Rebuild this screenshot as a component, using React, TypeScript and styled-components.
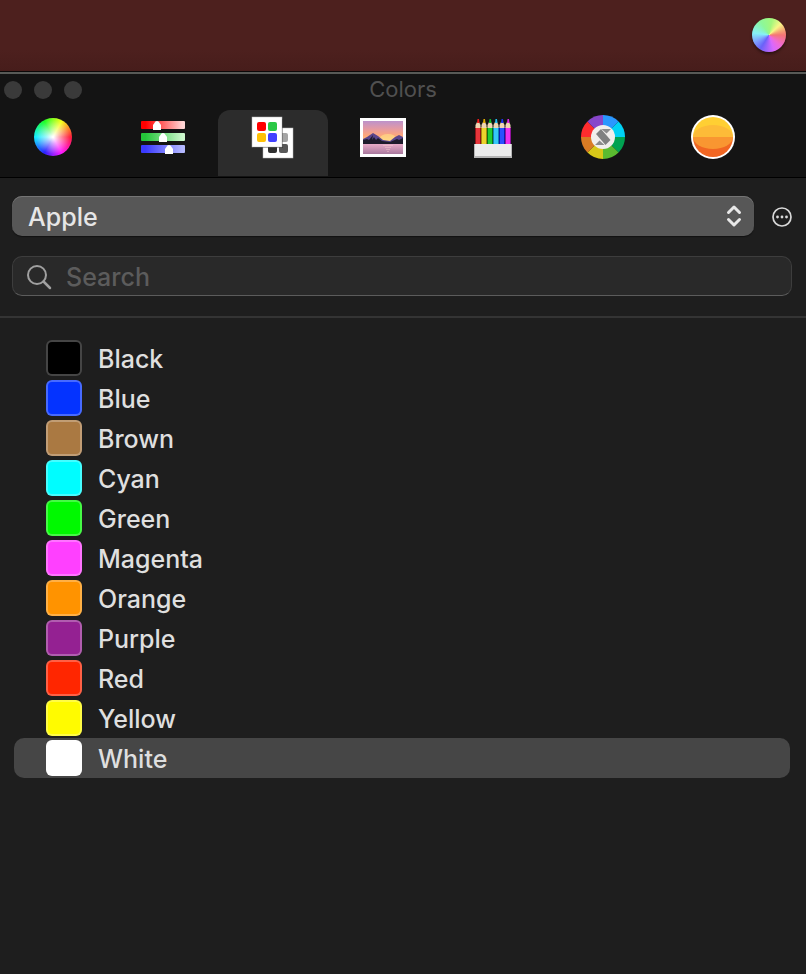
import React, { useState } from "react";
import styled, { createGlobalStyle } from "styled-components";

const GlobalStyle = createGlobalStyle`
  * { box-sizing: border-box; }
  html { background: #1e1e1e; }
  body {
    margin: 0;
    background: #1e1e1e;
    color: #dfdfdf;
    font-family: Inter, "Liberation Sans", sans-serif;
  }
  button, input, select { font: inherit; color: inherit; }
`;

const Desktop = styled.header`
  display: flex;
  justify-content: flex-end;
  align-items: center;
  height: 71px;
  padding: 0 20px 2px;
  background: linear-gradient(#4d201e 70%, #471d1b);
`;

const Wheel = styled.span<{ $size: number; $soft?: boolean }>`
  display: block;
  width: ${(p) => p.$size}px;
  height: ${(p) => p.$size}px;
  border-radius: 50%;
  background: ${(p) =>
    p.$soft
      ? "conic-gradient(from 90deg, #f57575, #f06ad8 12%, #d868ff 20%, #6a62f8 34%, #7d9cff 42%, #86f2f6 52%, #8cf79a 66%, #a2f77c 78%, #f8f787 88%, #f5a574 95%, #f57575)"
      : "radial-gradient(circle, #fff 2%, rgba(255,255,255,0.6) 24%, rgba(255,255,255,0) 64%), conic-gradient(from 90deg, #ff1e3c, #ff1cff 17%, #2a22ff 33%, #16eeff 50%, #1eff26 67%, #f6ff1c 83%, #ff1e3c)"};
  box-shadow: ${(p) => (p.$soft ? "0 2px 3px rgba(0, 0, 0, 0.45)" : "none")};
`;

const TitleArea = styled.div`
  border-top: 1px solid #0b0808;
  border-bottom: 1px solid #000;
  background: #141414;
`;

const TitleBar = styled.div`
  display: grid;
  grid-template-columns: 1fr auto 1fr;
  align-items: center;
  height: 38px;
  padding: 0 4px 6px;
  border-top: 2px solid #585a57;
`;

const Lights = styled.div`
  display: flex;
  gap: 12px;
  padding-top: 2px;
`;

const Light = styled.button`
  width: 18px;
  height: 18px;
  padding: 0;
  border: 0;
  border-radius: 50%;
  background: #3a3a3a;
`;

const Title = styled.h1`
  margin: 0;
  color: #505050;
  font-size: 22px;
  line-height: 28px;
  font-weight: 400;
`;

const Toolbar = styled.div`
  display: flex;
  height: 67px;
  margin-left: -2px;
`;

const Tab = styled.button<{ $active: boolean }>`
  display: flex;
  justify-content: center;
  width: 110px;
  height: 66px;
  padding: 0;
  border: 0;
  border-radius: 12px 12px 0 0;
  background: ${(p) => (p.$active ? "#2c2c2c" : "transparent")};
`;

const IconBox = styled.span`
  display: grid;
  place-items: center;
  width: 54px;
  height: 54px;
`;

const Controls = styled.div`
  display: grid;
  gap: 20px;
  padding: 18px 14px 20px 12px;
  border-bottom: 2px solid #343434;
`;

const PaletteRow = styled.div`
  display: flex;
  align-items: center;
  gap: 18px;
`;

const PopUp = styled.div`
  display: grid;
  flex: 1;
  align-items: center;
  height: 40px;
  border-radius: 10px;
  background: #575757;
  box-shadow: inset 0 1px 0 #757575, 0 1px 1px #111;

  > * { grid-area: 1 / 1; }
  > svg { justify-self: end; margin-right: 12px; pointer-events: none; }
`;

const Select = styled.select`
  width: 100%;
  height: 40px;
  padding: 2px 40px 0 16px;
  border: 0;
  outline: 0;
  appearance: none;
  background: transparent;
  color: #e6e6e6;
  font-size: 25px;
  font-weight: 500;
`;

const MoreButton = styled.button`
  display: flex;
  padding: 2px 0 0;
  border: 0;
  background: none;
`;

const SearchField = styled.label`
  display: flex;
  align-items: center;
  gap: 14px;
  height: 40px;
  padding: 2px 14px 0;
  border: 1px solid #3d3d3d;
  border-bottom-color: #5c5c5c;
  border-radius: 10px;
  background: #292929;
`;

const SearchInput = styled.input`
  flex: 1;
  min-width: 0;
  padding: 0;
  border: 0;
  outline: 0;
  background: transparent;
  font-size: 25px;
  font-weight: 500;
  line-height: 30px;

  &::placeholder { color: #5c5c5c; opacity: 1; }
`;

const ColorList = styled.ul`
  margin: 0;
  padding: 20px 16px 20px 14px;
  list-style: none;
`;

const ColorRow = styled.button<{ $selected: boolean }>`
  display: flex;
  align-items: center;
  gap: 16px;
  width: 100%;
  height: 40px;
  padding: 0 32px;
  border: 0;
  border-radius: 10px;
  background: ${(p) => (p.$selected ? "#464646" : "transparent")};
  font-size: 25px;
  font-weight: 500;
  line-height: 30px;
  text-align: left;
`;

const ColorName = styled.span`
  padding-top: 2px;
`;

const Swatch = styled.span<{ $color: string }>`
  width: 36px;
  height: 36px;
  border: 2px solid rgba(255, 255, 255, 0.27);
  border-radius: 6px;
  background: ${(p) => p.$color} border-box;
`;

const ToolIcon = ({ children }: { children: React.ReactNode }) => (
  <svg width="54" height="54" viewBox="0 0 54 54" aria-hidden="true">{children}</svg>
);

const sliders = [
  { id: "r", y: 11, x: 21, from: "#ff0000", to: "#ffd5d5" },
  { id: "g", y: 23, x: 27, from: "#24c63a", to: "#cdf8cd" },
  { id: "b", y: 35, x: 33, from: "#3a3aff", to: "#b5b9ff" },
];

const SlidersIcon = () => (
  <ToolIcon>
    {sliders.map((s) => (
      <g key={s.id}>
        <linearGradient id={`track-${s.id}`}>
          <stop offset="0.1" stopColor={s.from} />
          <stop offset="0.95" stopColor={s.to} />
        </linearGradient>
        <rect x="5" y={s.y} width="44" height="8" rx="1" fill={`url(#track-${s.id})`} />
        <path d={`M${s.x - 4} ${s.y + 9}v-5l2.500-3.500q1.500-1 3 0l2.500 3.500v5z`} fill="#fff" />
      </g>
    ))}
  </ToolIcon>
);

const Card = ({ x, y, colors }: { x: number; y: number; colors: string[] }) => (
  <g>
    <rect x={x} y={y} width="30" height="30" fill="#fff" stroke="#b9b9b9" strokeWidth="0.5" />
    {colors.map((c, i) => (
      <rect key={c} x={x + 5 + (i % 2) * 11} y={y + 5 + Math.floor(i / 2) * 11} width="9" height="9" rx="2" fill={c} />
    ))}
  </g>
);

const PalettesIcon = () => (
  <ToolIcon>
    <Card x={17} y={18} colors={["#cccccc", "#a5a5a5", "#303030", "#585858"]} />
    <rect x="7" y="9" width="30" height="29" fill="#000" opacity="0.35" />
    <Card x={6} y={7} colors={["#ff0000", "#2ac846", "#ffc107", "#4141ff"]} />
  </ToolIcon>
);

const PictureIcon = () => (
  <ToolIcon>
    <defs>
      <linearGradient id="sky" x2="0" y2="1">
        <stop offset="0" stopColor="#bd92cb" />
        <stop offset="0.35" stopColor="#e59aa2" />
        <stop offset="0.65" stopColor="#ffa878" />
        <stop offset="1" stopColor="#ffd980" />
      </linearGradient>
      <linearGradient id="lake" x2="0" y2="1">
        <stop offset="0" stopColor="#e8abc8" />
        <stop offset="1" stopColor="#a9799e" />
      </linearGradient>
    </defs>
    <rect x="4" y="8" width="46" height="39" fill="#fff" />
    <rect x="7" y="11" width="40" height="23" fill="url(#sky)" />
    <ellipse cx="32" cy="28" rx="8" ry="4" fill="#ffe98a" opacity="0.55" />
    <path d="M7 29l4-2 6-4 5 3 5 4 7 1 5-4 4-2 4 2v7H7z" fill="#5a458c" />
    <path d="M7 30l4-1 2 1 4-5-1 5 2-3 2 3 2-2 4 3 8 1 7-3 2 1 4-2v7H7z" fill="#1e1b2b" />
    <rect x="7" y="34" width="40" height="10" fill="url(#lake)" />
    <path d="M27 35.500h10M29 37.500h6M30 39.500h4M31 41.500h2" stroke="#ffd8d3" opacity="0.4" fill="none" />
  </ToolIcon>
);

const pencils = [
  ["#e6353b", "#8f1519", "#ee1c1c"],
  ["#ecd42c", "#a78a10", "#e0a800"],
  ["#22cc33", "#0b7315", "#12b828"],
  ["#35c8f8", "#1480b8", "#24bdf0"],
  ["#2b50ff", "#0a1eb0", "#1b35ee"],
  ["#ec32f0", "#8f129b", "#dd26e0"],
];

const PencilsIcon = () => (
  <ToolIcon>
    {pencils.map(([body, shade, tip], i) => {
      const x = 9 + i * 6;
      return (
        <g key={body}>
          <rect x={x} y="17" width="6" height="18" fill={shade} />
          <rect x={x + 1} y="17" width="4" height="18" fill={body} />
          <path d={`M${x + 0.5} 18v-3l1.500-3h2l1.500 3v3z`} fill="#f0d5b2" />
          <path d={`M${x + 2} 13l.5-4h1.500l.5 4z`} fill={tip} />
        </g>
      );
    })}
    <rect x="8" y="34" width="38" height="14" fill="#b5b5b5" />
    <rect x="9" y="34" width="36" height="12" fill="#ececec" />
  </ToolIcon>
);

const segments = ["#2a97ff", "#00d2f5", "#00a251", "#5abb30", "#d8c818", "#da7c24", "#ff2c2e", "#8846ca"];

const SegmentsIcon = () => (
  <ToolIcon>
    {segments.map((color, i) => (
      <path key={color} d="M27 27V5a22 22 0 0 1 15.560 6.440z" fill={color} transform={`rotate(${i * 45} 27 27)`} />
    ))}
    <circle cx="27" cy="27" r="12" fill="#f1eeec" />
    <path d="M20 24l5-5 9.500 11-5 5z" fill="#808080" />
    <path d="M25.500 19H35l-4.500 4.500zM19 35h9.500L23.500 30.500z" fill="#8c8c8c" />
  </ToolIcon>
);

const SunIcon = () => (
  <ToolIcon>
    <circle cx="27" cy="27" r="22" fill="#fff" />
    <path d="M7 27a20 20 0 0 1 40 0z" fill="#ffcf33" />
    <path d="M7 27a20 20 0 0 0 40 0z" fill="#f16622" />
    <path d="M7 27a20 12 0 0 1 40 0z" fill="#fdbb38" />
    <path d="M7 27a20 12 0 0 0 40 0z" fill="#f99631" />
  </ToolIcon>
);

const tabs = [
  { name: "Color Wheel", icon: <Wheel $size={38} /> },
  { name: "Color Sliders", icon: <SlidersIcon /> },
  { name: "Color Palettes", icon: <PalettesIcon /> },
  { name: "Image Palettes", icon: <PictureIcon /> },
  { name: "Pencils", icon: <PencilsIcon /> },
  { name: "Color Picker", icon: <SegmentsIcon /> },
  { name: "Swatches", icon: <SunIcon /> },
];

const colors = [
  ["Black", "#000000"],
  ["Blue", "#0433ff"],
  ["Brown", "#aa7942"],
  ["Cyan", "#00fdff"],
  ["Green", "#00f900"],
  ["Magenta", "#ff40ff"],
  ["Orange", "#ff9300"],
  ["Purple", "#942192"],
  ["Red", "#ff2600"],
  ["Yellow", "#fffb00"],
  ["White", "#ffffff"],
];

export default function App() {
  const [tab, setTab] = useState("Color Palettes");
  const [selected, setSelected] = useState("White");
  const [query, setQuery] = useState("");
  const shown = colors.filter(([name]) => name.toLowerCase().includes(query.toLowerCase()));

  return (
    <>
      <GlobalStyle />
      <Desktop>
        <Wheel $size={34} $soft />
      </Desktop>
      <main>
        <TitleArea>
          <TitleBar>
            <Lights>
              <Light aria-label="Close" />
              <Light aria-label="Minimize" />
              <Light aria-label="Zoom" />
            </Lights>
            <Title>Colors</Title>
          </TitleBar>
          <Toolbar role="tablist">
            {tabs.map((t) => (
              <Tab
                key={t.name}
                role="tab"
                aria-label={t.name}
                aria-selected={tab === t.name}
                $active={tab === t.name}
                onClick={() => setTab(t.name)}
              >
                <IconBox>{t.icon}</IconBox>
              </Tab>
            ))}
          </Toolbar>
        </TitleArea>
        <Controls>
          <PaletteRow>
            <PopUp>
              <Select aria-label="Palette" defaultValue="Apple">
                <option>Apple</option>
              </Select>
              <svg width="16" height="24" viewBox="0 0 16 24" fill="none" stroke="#e8e8e8" strokeWidth="3" strokeLinecap="round" strokeLinejoin="round" aria-hidden="true">
                <path d="M2.500 8.500L8 3l5.500 5.500M2.500 15.500L8 21l5.500-5.500" />
              </svg>
            </PopUp>
            <MoreButton aria-label="Palette options">
              <svg width="20" height="20" viewBox="0 0 20 20" aria-hidden="true">
                <circle cx="10" cy="10" r="9" fill="none" stroke="#d8d8d8" strokeWidth="1.700" />
                <g fill="#d8d8d8">
                  <circle cx="5.500" cy="10" r="1.400" />
                  <circle cx="10" cy="10" r="1.400" />
                  <circle cx="14.500" cy="10" r="1.400" />
                </g>
              </svg>
            </MoreButton>
          </PaletteRow>
          <SearchField>
            <svg width="25" height="26" viewBox="0 0 25 26" fill="none" stroke="#a0a0a0" strokeWidth="2" strokeLinecap="round" aria-hidden="true">
              <circle cx="10" cy="11" r="9" />
              <path d="M16.500 17.500l6.500 6.500" strokeWidth="2.500" />
            </svg>
            <SearchInput
              type="text"
              placeholder="Search"
              aria-label="Search"
              value={query}
              onChange={(e) => setQuery(e.target.value)}
            />
          </SearchField>
        </Controls>
        <ColorList>
          {shown.map(([name, color]) => (
            <li key={name}>
              <ColorRow $selected={selected === name} aria-pressed={selected === name} onClick={() => setSelected(name)}>
                <Swatch $color={color} />
                <ColorName>{name}</ColorName>
              </ColorRow>
            </li>
          ))}
        </ColorList>
      </main>
    </>
  );
}
